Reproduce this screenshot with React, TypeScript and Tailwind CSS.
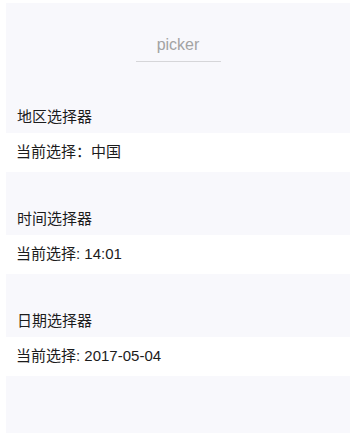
import React from "react";

const font = { fontFamily: '"Liberation Sans", "Noto Sans CJK SC", sans-serif' };

function Section({ title, value }: { title: string; value: string }) {
  return (
    <div className="pt-[37px]">
      <div className="pl-[11px] text-[15px] leading-[20px] text-[#1c1c1c]">{title}</div>
      <div className="mt-[6px] h-[39px] bg-white pl-[10px] flex items-center text-[15px] text-[#1c1c1c]">
        {value}
      </div>
    </div>
  );
}

export default function App() {
  return (
    <div className="w-[355px] h-[434px] bg-white overflow-hidden" style={font}>
      <div className="mt-[3px] ml-[6px] w-[344px] h-[430px] bg-[#f8f8fc]">
        <div className="pt-[29px] pb-[8px] flex flex-col items-center">
          <div className="text-[16px] leading-[26px] text-[#a3a3a3]">picker</div>
          <div className="mt-[3px] w-[85px] h-px bg-[#d6d6d9]" />
        </div>
        <Section title="地区选择器" value="当前选择：中国" />
        <Section title="时间选择器" value="当前选择: 14:01" />
        <Section title="日期选择器" value="当前选择: 2017-05-04" />
      </div>
    </div>
  );
}
